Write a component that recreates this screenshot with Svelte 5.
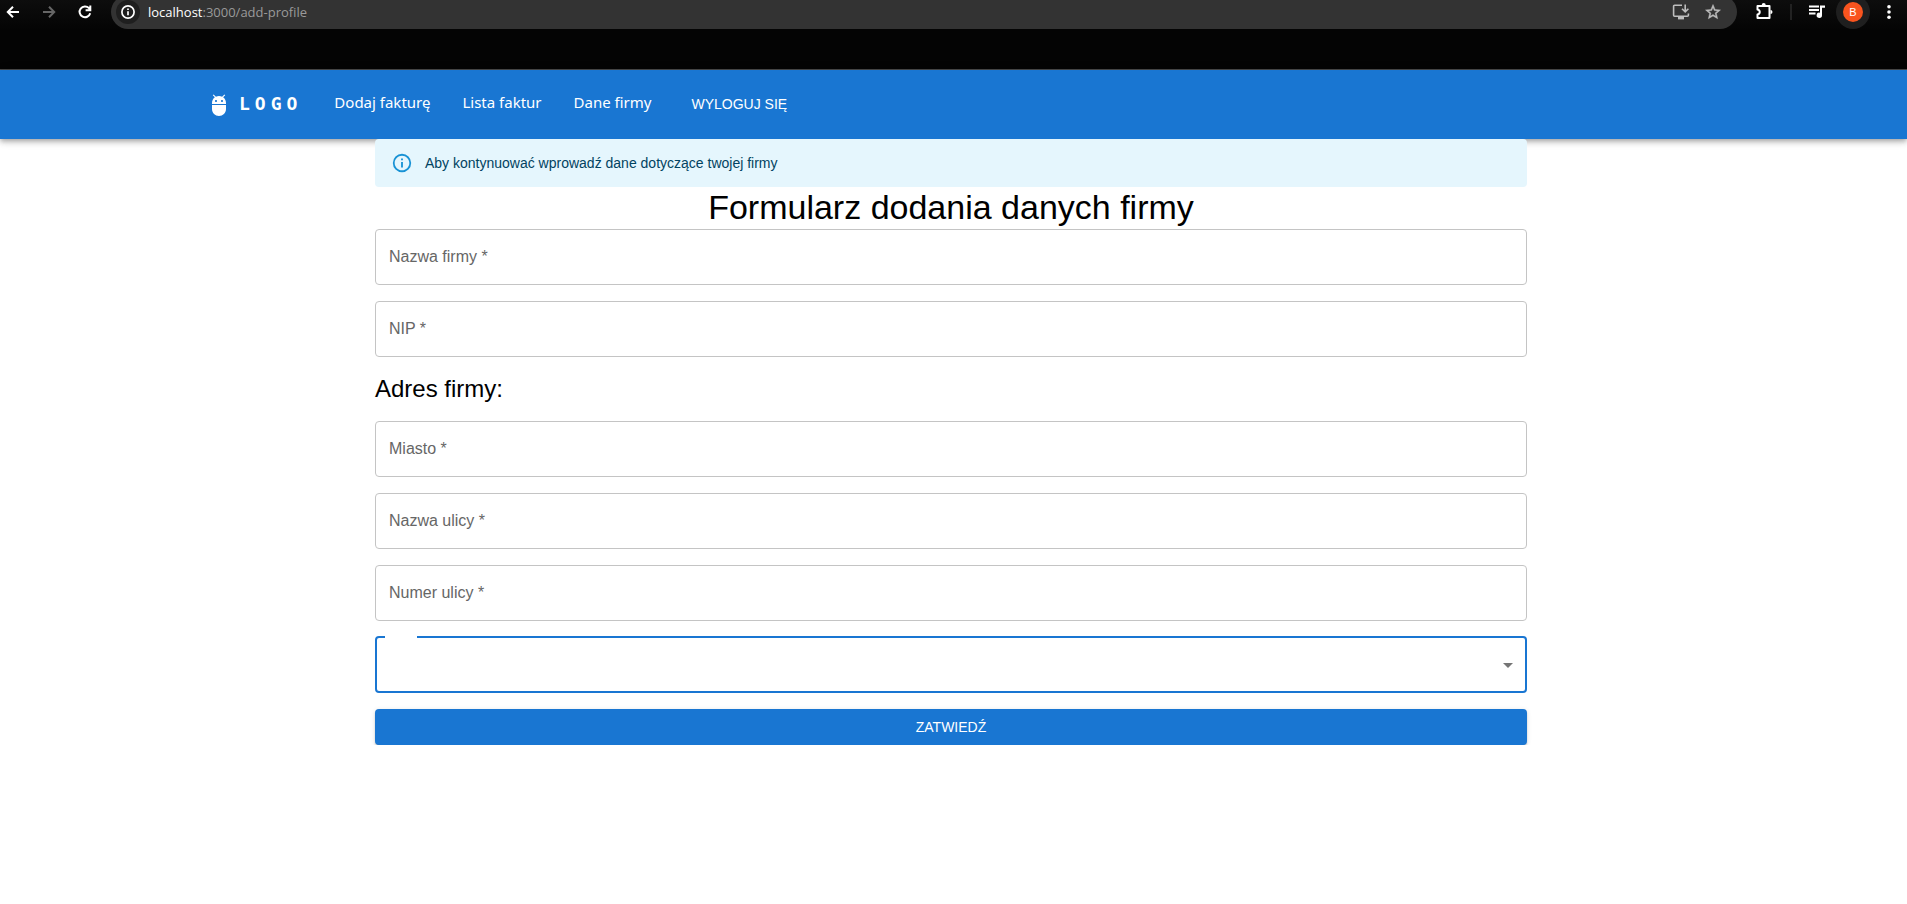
<script>
  const links = ['Dodaj fakturę', 'Lista faktur', 'Dane firmy'];
  const company = [
    { id: 'name', label: 'Nazwa firmy *' },
    { id: 'nip', label: 'NIP *' }
  ];
  const address = [
    { id: 'city', label: 'Miasto *' },
    { id: 'street', label: 'Nazwa ulicy *' },
    { id: 'number', label: 'Numer ulicy *' }
  ];
  let values = $state({ name: '', nip: '', city: '', street: '', number: '' });
</script>

{#snippet field(item)}
  <label class="field">
    {#if !values[item.id]}<span>{item.label}</span>{/if}
    <input type="text" name={item.id} aria-label={item.label} bind:value={values[item.id]} />
  </label>
{/snippet}

<div class="browser">
  <div class="toolbar">
    <button class="tool" aria-label="Back">
      <svg width="16" height="16" viewBox="0 0 16 16" fill="none" stroke="#fff" stroke-width="2"><path d="M14 8H3.500M8 2.800L2.800 8L8 13.200" /></svg>
    </button>
    <button class="tool" aria-label="Forward">
      <svg width="16" height="16" viewBox="0 0 16 16" fill="none" stroke="#666" stroke-width="2"><path d="M2 8h10.500M8 2.800L13.200 8L8 13.200" /></svg>
    </button>
    <button class="tool" aria-label="Reload">
      <svg width="16" height="16" viewBox="0 0 16 16" fill="none" stroke="#fff" stroke-width="2"><path d="M13.200 9.200A5.400 5.400 0 1 1 12 4.200L13 5.400M13.300 1.500V6.200H8.600" /></svg>
    </button>
    <div class="omnibox">
      <button class="site" aria-label="Site information">
        <svg width="16" height="16" viewBox="0 0 16 16" fill="none" stroke="#fff"><circle cx="8" cy="8" r="6.100" stroke-width="1.700" /><path d="M8 7.200v4M8 4.500v1.600" stroke-width="1.700" /></svg>
      </button>
      <span class="url"><b>localhost</b>:3000/add-profile</span>
      <button class="tool" aria-label="Install">
        <svg width="18" height="18" viewBox="0 0 18 18" fill="none" stroke="#bdbdbd" stroke-width="1.600"><path d="M10 2.300H2.600a1 1 0 0 0-1 1v8.900a1 1 0 0 0 1 1h12.800a1 1 0 0 0 1-1v-1.800M13.200 1.500v7M10 5.700l3.200 3.200l3.200-3.200" /><path d="M6 15.200h6" stroke-width="2.400" /></svg>
      </button>
      <button class="tool" aria-label="Bookmark">
        <svg width="18" height="18" viewBox="0 0 24 24" fill="#bdbdbd"><path d="M22 9.240l-7.190-.62L12 2 9.190 8.630 2 9.240l5.460 4.730L5.820 21 12 17.270 18.180 21l-1.630-7.030L22 9.240zM12 15.400l-3.760 2.270 1-4.280-3.320-2.880 4.380-.38L12 6.100l1.710 4.040 4.380.38-3.320 2.880 1 4.280L12 15.400z" stroke="#bdbdbd" stroke-width=".6" /></svg>
      </button>
    </div>
    <button class="tool" aria-label="Extensions">
      <svg width="20" height="20" viewBox="0 0 20 20" fill="none" stroke="#fff" stroke-width="2" stroke-linejoin="round"><path d="M3.500 4h12v12h-12v-3.500c3-.6 3-4.400 0-5z" /><path d="M7.700 3a2 2 0 0 1 4 0zM16.500 8a2 2 0 0 1 0 4z" fill="#fff" stroke="none" /></svg>
    </button>
    <span class="divider"></span>
    <button class="tool" aria-label="Media">
      <svg width="18" height="18" viewBox="0 0 18 18" fill="#fff"><path d="M1 2.500h10v2H1zM1 6h10v2H1zM1 9.500h6.500v2H1zM12 2.500h5v2.200h-3v7.600a2.700 2.700 0 1 1-2-2.600z" /></svg>
    </button>
    <button class="profile" aria-label="Profile"><span>B</span></button>
    <button class="tool" aria-label="Menu">
      <svg width="16" height="16" viewBox="0 0 16 16" fill="#fff"><circle cx="8" cy="2.800" r="1.800" /><circle cx="8" cy="8" r="1.800" /><circle cx="8" cy="13.200" r="1.800" /></svg>
    </button>
  </div>
</div>

<header class="appbar">
  <div class="wide">
    <svg width="24" height="24" viewBox="0 0 24 24" fill="#fff"><path d="M5 16c0 3.870 3.130 7 7 7s7-3.130 7-7v-4H5v4zM16.120 4.370l2.100-2.100-.82-.83-2.300 2.310C14.160 3.280 13.120 3 12 3s-2.160.28-3.090.75L6.600 1.440l-.82.83 2.100 2.100C6.140 5.640 5 7.680 5 10v1h14v-1c0-2.320-1.140-4.360-2.880-5.630zM9 9c-.55 0-1-.45-1-1s.45-1 1-1 1 .45 1 1-.45 1-1 1zm6 0c-.55 0-1-.45-1-1s.45-1 1-1 1 .45 1 1-.45 1-1 1z" /></svg>
    <a class="logo" href="#home">LOGO</a>
    <nav>
      {#each links as link}
        <a href="#{link}">{link}</a>
      {/each}
      <button class="logout">WYLOGUJ SIĘ</button>
    </nav>
  </div>
</header>

<main>
  <div class="alert" role="alert">
    <svg width="22" height="22" viewBox="0 0 24 24" fill="#0288d1"><path d="M11,9H13V7H11M12,20C7.590,20 4,16.410 4,12C4,7.590 7.590,4 12,4C16.410,4 20,7.590 20,12C20,16.410 16.410,20 12,20M12,2A10,10 0 0,0 2,12A10,10 0 0,0 12,22A10,10 0 0,0 22,12A10,10 0 0,0 12,2M11,17H13V11H11V17Z" /></svg>
    <span>Aby kontynuować wprowadź dane dotyczące twojej firmy</span>
  </div>
  <h1>Formularz dodania danych firmy</h1>
  <form onsubmit={(e) => e.preventDefault()}>
    {#each company as item}{@render field(item)}{/each}
    <h2>Adres firmy:</h2>
    {#each address as item}{@render field(item)}{/each}
    <fieldset>
      <legend></legend>
      <select aria-label="Wybierz"><option value=""></option></select>
      <svg width="24" height="24" viewBox="0 0 24 24" fill="#757575"><path d="M7 10l5 5 5-5z" /></svg>
    </fieldset>
    <button class="submit" type="submit">ZATWIEDŹ</button>
  </form>
</main>

<style>
  :global(body) {
    background: #fff;
    font-family: 'Liberation Sans', Arial, sans-serif;
    font-size: 16px;
    color: #000;
  }
  button, input, select {
    font: inherit;
    border: 0;
    margin: 0;
    padding: 0;
    background: none;
    color: inherit;
    box-sizing: border-box;
  }
  button { cursor: pointer; }
  svg { display: block; flex: none; }
  .browser {
    box-sizing: border-box;
    height: 70px;
    overflow: hidden;
    background: linear-gradient(#0d0d0d, #040404 30px);
    border-bottom: 1px solid #4a4a4a;
  }
  .toolbar {
    display: flex;
    align-items: center;
    height: 34px;
    margin-top: -5px;
    padding: 0 10px 0 5px;
    gap: 20px;
  }
  .tool { flex: none; }
  .omnibox {
    flex: 1;
    display: flex;
    align-items: center;
    gap: 14px;
    height: 34px;
    margin: 0 -3px 0 -2px;
    padding: 0 15px 0 5px;
    border-radius: 17px;
    background: #333;
    box-sizing: border-box;
  }
  .site {
    display: grid;
    place-items: center;
    width: 24px;
    height: 24px;
    border-radius: 50%;
    background: #1f1f1f;
  }
  .url {
    flex: 1;
    margin-left: -6px;
    font: 13px 'Open Sans', 'Noto Sans', sans-serif;
    color: #9a9a9a;
  }
  .url b { font-weight: 400; color: #fff; }
  .divider { width: 2px; height: 16px; margin: 0 -4px; background: #222; }
  .profile {
    display: grid;
    place-items: center;
    width: 34px;
    height: 34px;
    margin: 0 -9px 0 -10px;
    border-radius: 50%;
    background: #1f1f1f;
  }
  .profile span {
    width: 20px;
    border-radius: 50%;
    background: #f9541e;
    color: #fff;
    font-size: 11px;
    line-height: 20px;
  }
  .appbar {
    padding-right: 5px;
    background: #1976d2;
    box-shadow: 0 2px 4px -1px #0003, 0 4px 5px 0 #00000024, 0 1px 10px 0 #0000001f;
  }
  .wide {
    display: flex;
    align-items: center;
    gap: 8px;
    max-width: 1488px;
    height: 69px;
    margin: 0 auto;
    padding: 0 24px;
  }
  .wide a { color: #fff; text-decoration: none; }
  .logo {
    font: bold 18px 'DejaVu Sans Mono', monospace;
    letter-spacing: 5px;
    padding-bottom: 2px;
  }
  nav {
    display: flex;
    align-items: center;
    gap: 32px;
    margin-left: 24px;
    padding-bottom: 2px;
  }
  nav a { font: 15px/28px 'Noto Sans', sans-serif; padding-bottom: 4px; }
  .logout { font-size: 14px; line-height: 24px; color: #fff; padding: 0 8px; }
  main { max-width: 1152px; margin: 0 auto; padding: 0 29px 0 24px; }
  .alert {
    display: flex;
    align-items: center;
    gap: 12px;
    height: 48px;
    padding: 0 16px;
    border-radius: 4px;
    background: #e5f6fd;
    color: #014361;
    font-size: 14px;
  }
  .alert svg { opacity: 0.9; }
  h1 { margin: 0; padding-bottom: 2px; font-size: 34px; font-weight: 400; line-height: 40px; text-align: center; }
  h2 { margin: 0; font-size: 24px; font-weight: 400; line-height: 32px; }
  form { display: flex; flex-direction: column; gap: 16px; }
  .field { display: grid; align-items: center; color: #666; }
  .field > * { grid-area: 1 / 1; }
  .field span { padding: 0 14px; }
  .field input {
    width: 100%;
    height: 56px;
    padding: 0 14px;
    border: 1px solid #c4c4c4;
    border-radius: 4px;
    color: #000;
  }
  fieldset {
    display: grid;
    align-items: center;
    height: 57px;
    box-sizing: border-box;
    margin: -1px 0 0;
    padding: 0 8px;
    border: 2px solid #1976d2;
    border-radius: 4px;
    min-width: 0;
  }
  legend { width: 32px; height: 2px; padding: 0; }
  select { grid-area: 1 / 1; width: 100%; height: 53px; padding: 0 6px; appearance: none; outline: 0; }
  fieldset svg { grid-area: 1 / 1; justify-self: end; margin-right: -3px; pointer-events: none; }
  .submit {
    height: 36px;
    border-radius: 4px;
    background: #1976d2;
    color: #fff;
    font-size: 14px;
    box-shadow: 0 3px 1px -2px #0003, 0 2px 2px 0 #00000024, 0 1px 5px 0 #0000001f;
  }
</style>
